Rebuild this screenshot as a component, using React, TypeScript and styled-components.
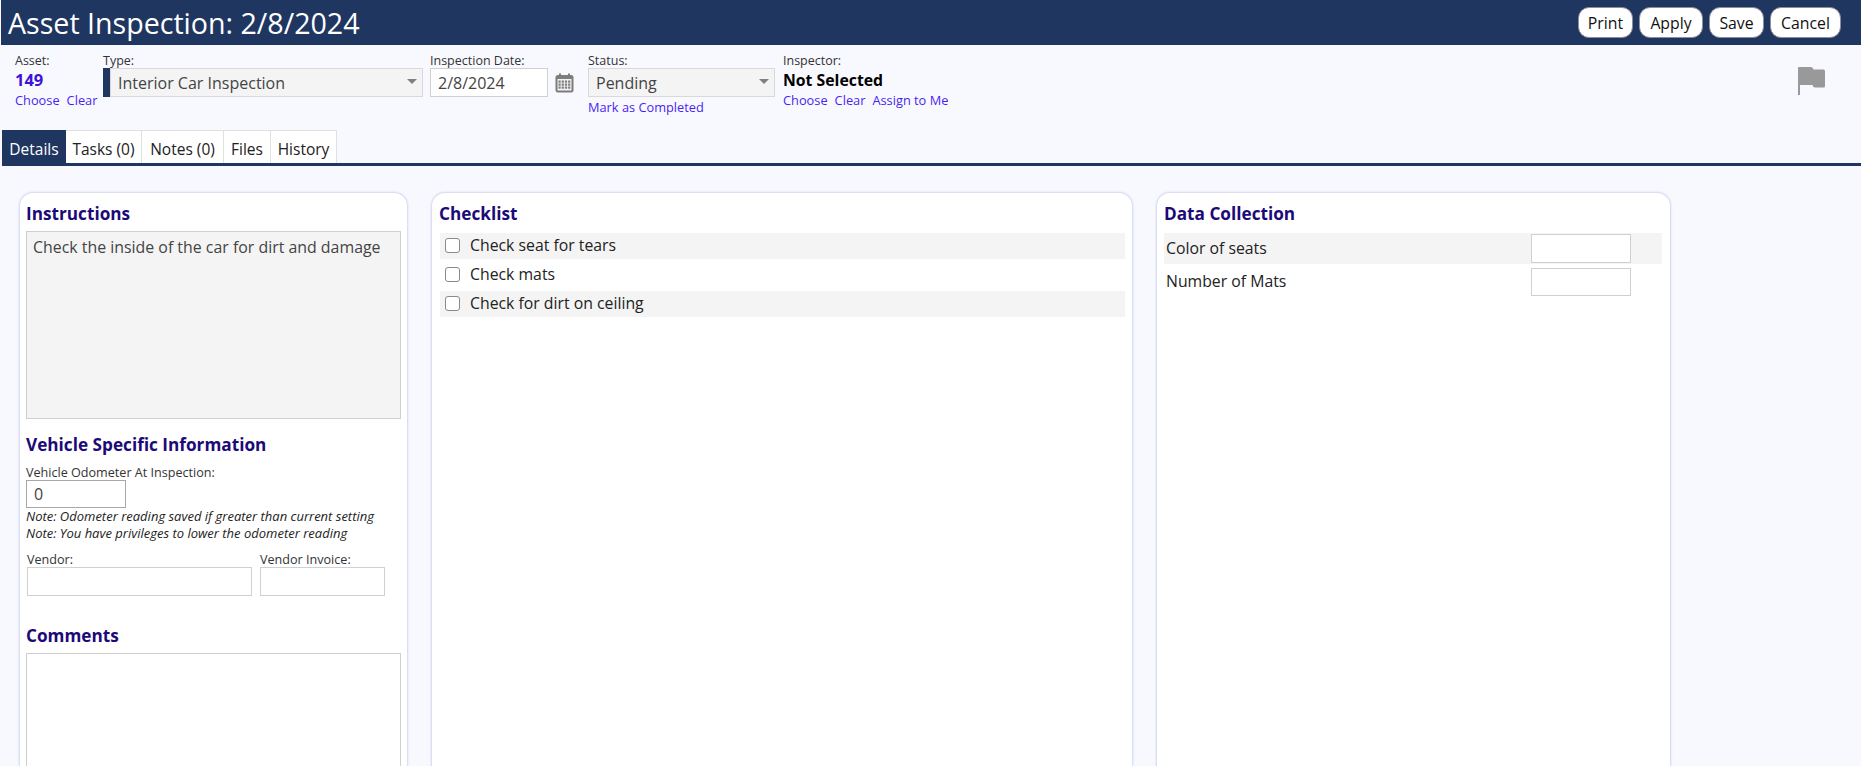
import React from "react";
import styled, { createGlobalStyle } from "styled-components";

const Global = createGlobalStyle`
  html, body { margin: 0; padding: 0; height: 100%; overflow: hidden; background: #f8f9ff; }
  body { font-family: "Open Sans", "Noto Sans", "Liberation Sans", sans-serif; color: #222; }
  * { box-sizing: border-box; }
`;

const Page = styled.div`
  height: 766px;
  overflow: hidden;
  padding-left: 1px;
  background: #f8f9ff;
`;

const Header = styled.header`
  height: 45px;
  background: #1f3661;
  display: flex;
  align-items: center;
  justify-content: space-between;
  padding: 0 20px 0 7px;
`;

const Title = styled.h1`
  margin: 0;
  font-size: 28.6px;
  font-weight: 400;
  color: #fff;
  line-height: 45px;
`;

const Actions = styled.div`
  display: flex;
  gap: 6px;
`;

const ActionButton = styled.button<{ $w: number }>`
  width: ${(p) => p.$w}px;
  height: 31px;
  padding: 0;
  border: 1px solid #8a8f99;
  border-radius: 11px;
  background: #fff;
  color: #111;
  font: 400 15.8px "Open Sans", sans-serif;
`;

const FilterBar = styled.div`
  height: 85px;
  display: flex;
  padding: 8px 0 0 14px;
  position: relative;
`;

const Field = styled.div<{ $w: number; $right?: number }>`
  width: ${(p) => p.$w}px;
  padding-right: ${(p) => p.$right ?? 0}px;
  flex: none;
  display: flex;
  flex-direction: column;
`;

const SmallLabel = styled.label`
  display: block;
  height: 15px;
  font-size: 12.5px;
  line-height: 15px;
  color: #333;
`;

const AssetNumber = styled.div`
  font-size: 16.5px;
  font-weight: 700;
  color: #3c14d8;
  line-height: 24px;
`;

const BoldValue = styled.div`
  font-size: 15.8px;
  font-weight: 700;
  color: #000;
  line-height: 24px;
  height: 24px;
`;

const LinkRow = styled.div<{ $top?: number }>`
  display: flex;
  gap: 7px;
  margin-top: ${(p) => p.$top ?? 0}px;
  font-size: 12.8px;
  line-height: 16px;
  color: #4b1ff0;
  white-space: nowrap;
`;

const DropWrap = styled.div`
  display: flex;
  height: 29px;
`;

const AccentBar = styled.div`
  width: 7px;
  background: #1f3661;
`;

const Drop = styled.div`
  flex: 1;
  height: 29px;
  display: flex;
  align-items: center;
  justify-content: space-between;
  padding: 0 5px 0 7px;
  background: #f4f4f4;
  border: 1px solid #d9d9d9;
  font-size: 16px;
  color: #444;
`;

const Caret = styled.span`
  width: 0;
  height: 0;
  margin-bottom: 2px;
  border-left: 5px solid transparent;
  border-right: 5px solid transparent;
  border-top: 5px solid #808080;
`;

const DateRow = styled.div`
  display: flex;
  align-items: center;
  gap: 7px;
`;

const TextBox = styled.input<{ $w: number; $h: number; $dark?: boolean }>`
  display: block;
  width: ${(p) => p.$w}px;
  height: ${(p) => p.$h}px;
  flex: none;
  padding: 0 7px;
  margin: 0;
  border: 1px solid ${(p) => (p.$dark ? "#a8a8a8" : "#d0d0d0")};
  border-radius: 0;
  outline: none;
  background: #fff;
  font: 400 16px "Open Sans", sans-serif;
  color: #444;
`;

const FlagSlot = styled.div`
  position: absolute;
  left: 1797px;
  top: 22px;
  line-height: 0;
`;

const TabStrip = styled.nav`
  height: 36px;
  display: flex;
  margin-left: 1px;
  border-bottom: 3px solid #1f3661;
`;

const Tab = styled.div<{ $w: number; $active?: boolean }>`
  width: ${(p) => p.$w}px;
  height: 33px;
  display: flex;
  align-items: center;
  justify-content: center;
  padding-top: 3px;
  font-size: 15.5px;
  background: ${(p) => (p.$active ? "#1f3661" : "#fff")};
  color: ${(p) => (p.$active ? "#fff" : "#222")};
  border: 1px solid ${(p) => (p.$active ? "#1f3661" : "#e0e0e0")};
  border-bottom: none;
  border-left: ${(p) => (p.$active ? "1px solid #1f3661" : "none")};
`;

const Columns = styled.main`
  display: flex;
  align-items: flex-start;
  padding: 27px 0 0 19px;
`;

const Panel = styled.section<{ $w: number; $gap: number; $pad: number }>`
  width: ${(p) => p.$w}px;
  height: 640px;
  flex: none;
  margin-right: ${(p) => p.$gap}px;
  padding: 9px ${(p) => p.$pad}px 0;
  background: #fff;
  border-radius: 13px;
  box-shadow: 0 0 2px 1px #cfd6ec;
`;

const Heading = styled.h2<{ $top?: number }>`
  margin: ${(p) => p.$top ?? 0}px 0 0;
  height: 23px;
  font-size: 17.2px;
  line-height: 23px;
  font-weight: 700;
  color: #1c0a78;
`;

const InstructionBox = styled.div`
  margin-top: 6px;
  height: 188px;
  padding: 5px 6px;
  background: #f4f4f4;
  border: 1px solid #cfcfcf;
  font-size: 15.9px;
  line-height: 20px;
  color: #444;
`;

const FieldLabel = styled.label<{ $top?: number }>`
  display: block;
  height: 15px;
  margin-top: ${(p) => p.$top ?? 0}px;
  font-size: 12.6px;
  line-height: 15px;
  color: #333;
`;

const Note = styled.div`
  font-size: 13px;
  font-style: italic;
  line-height: 17px;
  color: #222;
`;

const VendorRow = styled.div`
  display: flex;
  gap: 8px;
  margin: 10px 0 0 1px;
`;

const CommentBox = styled.textarea`
  display: block;
  width: 100%;
  height: 200px;
  margin-top: 6px;
  border: 1px solid #cfcfcf;
  background: #fff;
  resize: none;
  outline: none;
`;

const CheckRow = styled.div<{ $shade?: boolean }>`
  display: flex;
  align-items: center;
  height: 26px;
  margin-bottom: 3px;
  padding: 0 0 2px 5px;
  gap: 10px;
  font-size: 15.8px;
  color: #222;
  background: ${(p) => (p.$shade ? "#f4f4f4" : "transparent")};
`;

const CheckBox = styled.span`
  width: 15px;
  height: 15px;
  flex: none;
  border: 1px solid #8a8a8a;
  border-radius: 3px;
  background: #fff;
`;

const DataRow = styled.div<{ $shade?: boolean; $h: number }>`
  display: flex;
  align-items: center;
  justify-content: space-between;
  height: ${(p) => p.$h}px;
  padding: 0 31px 0 2px;
  font-size: 15.8px;
  color: #222;
  background: ${(p) => (p.$shade ? "#f4f4f4" : "transparent")};
`;

const DataLabel = styled.span`
  padding-bottom: 2px;
`;

const ChecklistBody = styled.div`
  margin: 8px 0 0 1px;
`;

const DataBody = styled.div`
  margin: 8px 1px 0 0;
`;

const CalendarIcon = () => (
  <svg width="19" height="20" viewBox="0 0 19 20">
    <rect x="0.5" y="2" width="18" height="17.5" rx="2.5" fill="#7d7d7d" />
    <rect x="4" y="0.5" width="2" height="3" fill="#7d7d7d" />
    <rect x="13" y="0.5" width="2" height="3" fill="#7d7d7d" />
    <rect x="2.5" y="6" width="14" height="11.5" fill="#f2f2f2" />
    {[7.5, 10.5, 13.5].map((y) =>
      [3.5, 6.7, 9.9, 13.1].map((x) => (
        <rect key={`${x}-${y}`} x={x} y={y} width="2.2" height="2.2" fill="#7d7d7d" />
      ))
    )}
  </svg>
);

const FlagIcon = () => (
  <svg width="27" height="28" viewBox="0 0 27 28">
    <path
      d="M0 1Q0 0 1 0H13Q15 0 15.5 2.5H25.5Q27 2.5 27 4V19Q27 20.5 25.5 20.5H17Q15 20.5 14.5 18H2V28H0Z"
      fill="#999"
    />
  </svg>
);

export default function App() {
  return (
    <Page>
      <Global />
      <Header>
        <Title>Asset Inspection: 2/8/2024</Title>
        <Actions>
          <ActionButton $w={55}>Print</ActionButton>
          <ActionButton $w={64}>Apply</ActionButton>
          <ActionButton $w={55}>Save</ActionButton>
          <ActionButton $w={71}>Cancel</ActionButton>
        </Actions>
      </Header>

      <FilterBar>
        <Field $w={88}>
          <SmallLabel>Asset:</SmallLabel>
          <AssetNumber>149</AssetNumber>
          <LinkRow><span>Choose</span><span>Clear</span></LinkRow>
        </Field>
        <Field $w={327} $right={7}>
          <SmallLabel>Type:</SmallLabel>
          <DropWrap>
            <AccentBar />
            <Drop>Interior Car Inspection<Caret /></Drop>
          </DropWrap>
        </Field>
        <Field $w={158}>
          <SmallLabel>Inspection Date:</SmallLabel>
          <DateRow>
            <TextBox $w={118} $h={29} defaultValue="2/8/2024" />
            <CalendarIcon />
          </DateRow>
        </Field>
        <Field $w={195} $right={8}>
          <SmallLabel>Status:</SmallLabel>
          <DropWrap>
            <Drop>Pending<Caret /></Drop>
          </DropWrap>
          <LinkRow $top={2}><span>Mark as Completed</span></LinkRow>
        </Field>
        <Field $w={240}>
          <SmallLabel>Inspector:</SmallLabel>
          <BoldValue>Not Selected</BoldValue>
          <LinkRow><span>Choose</span><span>Clear</span><span>Assign to Me</span></LinkRow>
        </Field>
        <FlagSlot><FlagIcon /></FlagSlot>
      </FilterBar>

      <TabStrip>
        <Tab $w={64} $active>Details</Tab>
        <Tab $w={76}>Tasks (0)</Tab>
        <Tab $w={82}>Notes (0)</Tab>
        <Tab $w={47}>Files</Tab>
        <Tab $w={66}>History</Tab>
      </TabStrip>

      <Columns>
        <Panel $w={387} $gap={25} $pad={6}>
          <Heading>Instructions</Heading>
          <InstructionBox>Check the inside of the car for dirt and damage</InstructionBox>
          <Heading $top={14}>Vehicle Specific Information</Heading>
          <FieldLabel $top={9}>Vehicle Odometer At Inspection:</FieldLabel>
          <TextBox $w={100} $h={28} $dark defaultValue="0" />
          <Note>Note: Odometer reading saved if greater than current setting</Note>
          <Note>Note: You have privileges to lower the odometer reading</Note>
          <VendorRow>
            <Field $w={225}>
              <FieldLabel>Vendor:</FieldLabel>
              <TextBox $w={225} $h={29} />
            </Field>
            <Field $w={125}>
              <FieldLabel>Vendor Invoice:</FieldLabel>
              <TextBox $w={125} $h={29} />
            </Field>
          </VendorRow>
          <Heading $top={28}>Comments</Heading>
          <CommentBox />
        </Panel>

        <Panel $w={700} $gap={25} $pad={7}>
          <Heading>Checklist</Heading>
          <ChecklistBody>
            <CheckRow $shade><CheckBox />Check seat for tears</CheckRow>
            <CheckRow><CheckBox />Check mats</CheckRow>
            <CheckRow $shade><CheckBox />Check for dirt on ceiling</CheckRow>
          </ChecklistBody>
        </Panel>

        <Panel $w={513} $gap={0} $pad={7}>
          <Heading>Data Collection</Heading>
          <DataBody>
            <DataRow $shade $h={31}><DataLabel>Color of seats</DataLabel><TextBox $w={100} $h={29} /></DataRow>
            <DataRow $h={35}><DataLabel>Number of Mats</DataLabel><TextBox $w={100} $h={28} /></DataRow>
          </DataBody>
        </Panel>
      </Columns>
    </Page>
  );
}
